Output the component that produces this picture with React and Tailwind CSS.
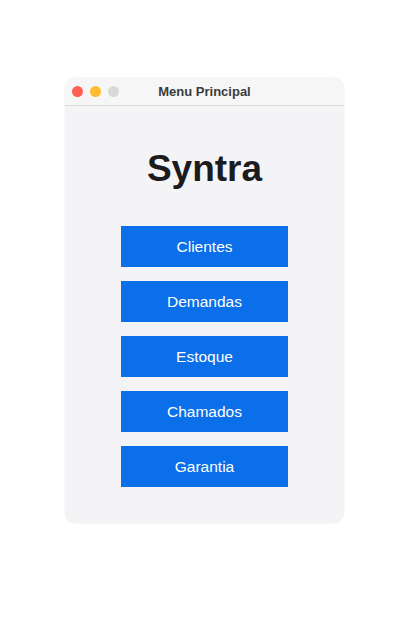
export default function App() {
  const items = ["Clientes", "Demandas", "Estoque", "Chamados", "Garantia"];
  return (
    <div className="min-h-screen bg-white" style={{ fontFamily: '"Liberation Sans", Arial, sans-serif' }}>
      <div className="pt-[78px] pl-[65px]">
        <div className="w-[279px] h-[445px] rounded-[10px] bg-[#f4f4f7] overflow-hidden flex flex-col shadow-[0_0_0_0.5px_rgba(0,0,0,0.06)]">
          <div className="h-[28px] bg-[#f6f6f7] border-b border-[#dcdcdc] flex items-center relative">
            <div className="flex gap-[7px] pl-[7px]">
              <span className="w-[11px] h-[11px] rounded-full bg-[#fe5f57]" />
              <span className="w-[11px] h-[11px] rounded-full bg-[#febc2e]" />
              <span className="w-[11px] h-[11px] rounded-full bg-[#d9d9d9]" />
            </div>
            <div className="absolute inset-0 flex items-center justify-center text-[13px] font-bold text-[#3c3c3c]">
              Menu Principal
            </div>
          </div>
          <div className="flex flex-col items-center pt-[44px]">
            <h1 className="text-[37px] leading-[37px] font-bold text-[#1c1c1e]">Syntra</h1>
            <div className="mt-[39px] flex flex-col gap-[14px]">
              {items.map((t) => (
                <button key={t} className="w-[167px] h-[41px] bg-[#0a6fe8] text-white text-[15.5px] flex items-center justify-center">
                  {t}
                </button>
              ))}
            </div>
          </div>
        </div>
      </div>
    </div>
  );
}
